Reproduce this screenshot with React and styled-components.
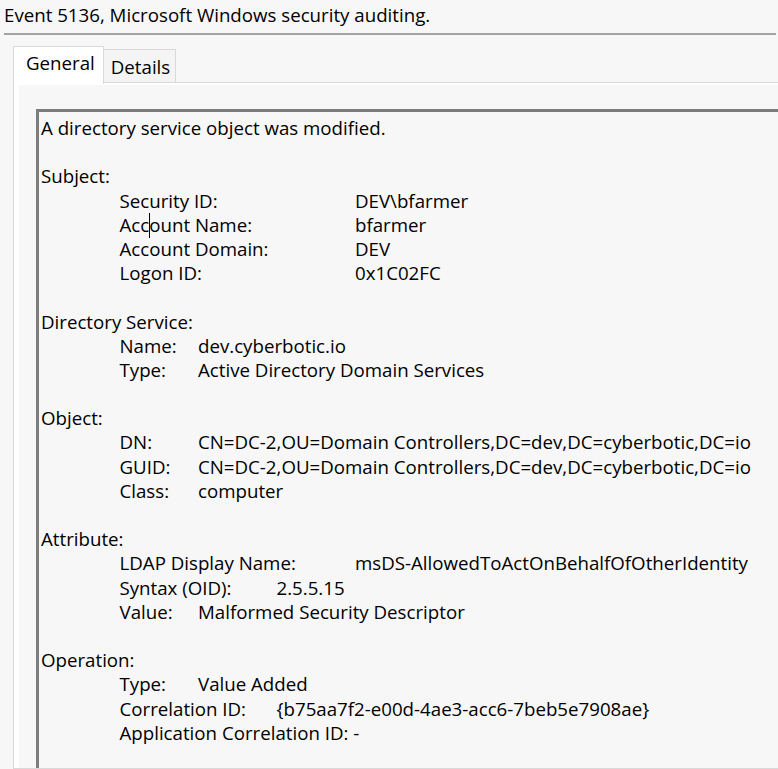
import styled, { createGlobalStyle } from 'styled-components'

const TAB = 78.5
const LINE = 24.2
const FONT = '18.7px'

const GlobalStyle = createGlobalStyle`
  html, body {
    margin: 0;
    padding: 0;
    background: #f7f7f7;
    overflow: hidden;
  }
  body {
    font-family: "Open Sans", "Noto Sans", sans-serif;
    color: #000;
  }
`

const Window = styled.div`
  width: 778px;
  height: 769px;
  overflow: hidden;
  display: flex;
  flex-direction: column;
`

const Title = styled.div`
  padding: 3px 4px 0;
  height: 24px;
  line-height: 24px;
  font-size: ${FONT};
  white-space: nowrap;
`

const Rule = styled.div`
  margin: 6px 2px 0 4px;
  height: 2px;
  background: #a3a3a3;
`

const TabStrip = styled.div`
  display: flex;
  align-items: flex-end;
  margin: 11px 0 0 13px;
  position: relative;
  z-index: 1;
`

const Tab = styled.div`
  box-sizing: border-box;
  height: ${p => (p.$active ? 38 : 33)}px;
  margin-bottom: ${p => (p.$active ? -2 : 0)}px;
  margin-left: ${p => (p.$active ? 0 : -1)}px;
  padding: ${p => (p.$active ? '4px 8px 0 12px' : '5px 5px 0 7px')};
  border: 1px solid #d9d9d9;
  border-bottom: none;
  background: ${p => (p.$active ? '#fff' : '#f4f4f4')};
  font-size: ${FONT};
  line-height: 24px;
  white-space: nowrap;
`

const Panel = styled.div`
  flex: 1;
  margin-left: 13px;
  width: 820px;
  border: 1px solid #d9d9d9;
  background: #fff;
  padding: 2px 0 0 5px;
  display: flex;
`

const PanelBody = styled.div`
  flex: 1;
  background: #f7f7f7;
  padding: 24px 0 0 17px;
  display: flex;
`

const TextBox = styled.div`
  flex: 1;
  border: 3px solid #7c7c7c;
  border-right: none;
  border-bottom: none;
  padding: 4px 0 0 2px;
  font-size: ${FONT};
  line-height: ${LINE}px;
  white-space: nowrap;
`

const Line = styled.div`
  height: ${LINE}px;
`

const Section = styled.div`
  margin-top: ${LINE}px;
`

const Row = styled.div`
  display: flex;
  height: ${LINE}px;
  padding-left: ${TAB}px;
`

const Label = styled.span`
  flex: none;
  width: ${p => (p.$stops ? p.$stops * TAB + 'px' : 'auto')};
`

const Caret = styled.span`
  display: inline-block;
  width: 0;
  height: 25px;
  border-left: 1px solid #000;
  margin-right: -1px;
  vertical-align: -6px;
`

const sections = [
  {
    head: 'Subject:',
    rows: [
      ['Security ID:', 3, 'DEV\\bfarmer'],
      ['Account Name:', 3, 'bfarmer'],
      ['Account Domain:', 3, 'DEV'],
      ['Logon ID:', 3, '0x1C02FC'],
    ],
  },
  {
    head: 'Directory Service:',
    rows: [
      ['Name:', 1, 'dev.cyberbotic.io'],
      ['Type:', 1, 'Active Directory Domain Services'],
    ],
  },
  {
    head: 'Object:',
    rows: [
      ['DN:', 1, 'CN=DC-2,OU=Domain Controllers,DC=dev,DC=cyberbotic,DC=io'],
      ['GUID:', 1, 'CN=DC-2,OU=Domain Controllers,DC=dev,DC=cyberbotic,DC=io'],
      ['Class:', 1, 'computer'],
    ],
  },
  {
    head: 'Attribute:',
    rows: [
      ['LDAP Display Name:', 3, 'msDS-AllowedToActOnBehalfOfOtherIdentity'],
      ['Syntax (OID):', 2, '2.5.5.15'],
      ['Value:', 1, 'Malformed Security Descriptor'],
    ],
  },
  {
    head: 'Operation:',
    rows: [
      ['Type:', 1, 'Value Added'],
      ['Correlation ID:', 2, '{b75aa7f2-e00d-4ae3-acc6-7beb5e7908ae}'],
      ['Application Correlation ID:\u00a0', 0, '-'],
    ],
  },
]

function FieldLabel({ text }) {
  // the edit caret sits inside "Account"
  if (text === 'Account Name:') {
    return (
      <>
        Acc<Caret />ount Name:
      </>
    )
  }
  return text
}

export default function App() {
  return (
    <Window>
      <GlobalStyle />
      <Title>Event 5136, Microsoft Windows security auditing.</Title>
      <Rule />
      <TabStrip>
        <Tab $active>General</Tab>
        <Tab>Details</Tab>
      </TabStrip>
      <Panel>
        <PanelBody>
          <TextBox>
            <Line>A directory service object was modified.</Line>
            {sections.map(s => (
              <Section key={s.head}>
                <Line>{s.head}</Line>
                {s.rows.map(([label, stops, value], i) => (
                  <Row key={i}>
                    <Label $stops={stops}>
                      <FieldLabel text={label} />
                    </Label>
                    <span>{value}</span>
                  </Row>
                ))}
              </Section>
            ))}
          </TextBox>
        </PanelBody>
      </Panel>
    </Window>
  )
}
